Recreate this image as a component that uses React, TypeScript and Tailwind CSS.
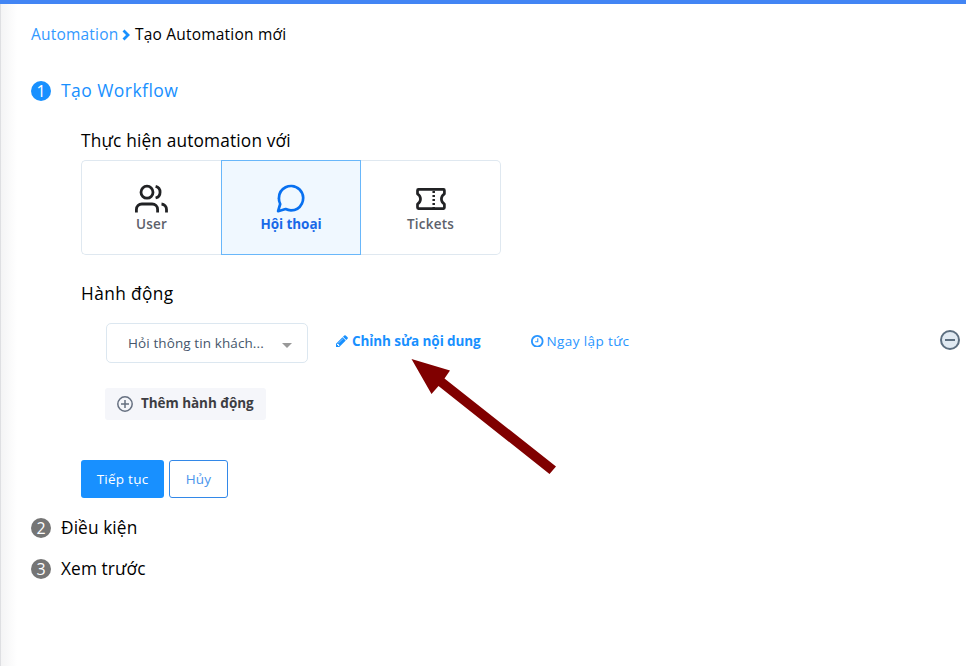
import type { ReactNode } from "react";

function Step({ n, active, children }: { n: number; active?: boolean; children: ReactNode }) {
  return (
    <div className="flex h-6 items-center">
      <span
        className={`flex size-5 shrink-0 items-center justify-center rounded-full text-[16px] leading-5 text-white ${
          active ? "bg-[#1890ff]" : "bg-[#757575]"
        }`}
      >
        {n}
      </span>
      <span className={`ml-2.5 pb-px whitespace-nowrap ${active ? "text-[17.5px] tracking-[0.45px] text-[#1890ff]" : "text-[17.3px] tracking-[0.1px] text-black"}`}>
        {children}
      </span>
    </div>
  );
}

function UsersIcon() {
  return (
    <svg className="block size-9" viewBox="0 0 36 36" fill="none" stroke="currentColor" strokeWidth="2.800">
      <path d="M2.400 32.500V29.500A5.500 5.500 0 0 1 7.900 24H18.100A5.500 5.500 0 0 1 23.600 29.500V32.500" />
      <circle cx="13" cy="12.200" r="6" />
      <path d="M32.500 32.500V29.500A5.500 5.500 0 0 0 27.500 24" />
      <path d="M21.600 6.400a6 6 0 0 1 0 11.600" />
    </svg>
  );
}

function ChatIcon() {
  return (
    <svg className="block size-9" viewBox="0 0 24 24" fill="none" stroke="currentColor" strokeWidth="1.800" strokeLinejoin="round">
      <path transform="translate(-.3 .9)" d="M20.400 11.200a8 8 0 0 1-.85 3.600 8.100 8.100 0 0 1-7.250 4.500 8 8 0 0 1-3.600-.85L3.700 19.900l1.400-4.800a8 8 0 0 1-.85-3.900 8.100 8.100 0 0 1 4.450-7.250 8 8 0 0 1 3.600-.85h.5a8.100 8.100 0 0 1 7.600 7.600z" />
    </svg>
  );
}

function TicketIcon() {
  return (
    <svg className="block h-6 w-8" viewBox="0 0 32 24" fill="none" stroke="currentColor" strokeLinejoin="round">
      <path strokeWidth="2.7" d="M3.400 2.400H28.600Q29.400 2.400 29.400 3.400V6.800Q26.400 8.800 26.400 12Q26.400 15.200 29.400 17.200V20.600Q29.400 21.600 28.600 21.600H3.400Q2.500 21.600 2.500 20.600V17.200Q5.500 15.200 5.500 12Q5.500 8.800 2.500 6.800V3.400Q2.500 2.400 3.400 2.400Z" />
      <path strokeWidth="2.500" strokeDasharray="2 2" d="M18.700 4V21" />
    </svg>
  );
}

export default function App() {
  return (
    <div className="relative h-[666px] w-[966px] overflow-hidden border-t-4 border-[#4285f4] bg-white font-['Open_Sans','Noto_Sans',sans-serif] text-black">
      <div className="flex h-full">
        <div className="w-[17px] shrink-0 border-l border-[#dedfe2] bg-linear-to-r from-[#f4f4f5] to-white" />
        <main className="flex flex-1 flex-col pt-[19px] pl-3.5">
          <nav className="flex h-6 items-center text-[15.5px] tracking-[0.2px] whitespace-nowrap">
            <a className="w-[89px] text-[#3399ff]">Automation</a>
            <svg className="mr-[4px] ml-[2px] h-[12px] w-[9px]" viewBox="0 0 9 12" fill="none" stroke="#1890ff" strokeWidth="2.800">
              <path d="M1.500 1.500L6 6L1.500 10.500" />
            </svg>
            <span>Tạo Automation mới</span>
          </nav>

          <div className="mt-8">
            <Step n={1} active>Tạo Workflow</Step>
          </div>

          <section className="mt-[26px] ml-[50px]">
            <h2 className="h-6 text-[17.3px] leading-[23px] tracking-[0.16px]">Thực hiện automation với</h2>
            <div className="mt-[7px] flex h-[95px] w-[420px] text-[13.5px] leading-5 font-semibold">
              <div className="flex w-[140px] flex-col items-center rounded-l-[5px] border border-r-0 border-[#dfe8f0] pt-[19px] text-[#5d616b]">
                <span className="text-[#212224]"><UsersIcon /></span>
                <span className="-mt-[2px] tracking-[0.2px]">User</span>
              </div>
              <div className="flex w-[140px] flex-col items-center border border-[#69b7fa] bg-[#f0f8ff] pt-[19px] text-[#1868e8]">
                <span className="text-[#0870f0]"><ChatIcon /></span>
                <span className="-mt-[2px] font-bold tracking-[-0.05px]">Hội thoại</span>
              </div>
              <div className="flex w-[140px] flex-col items-center rounded-r-[5px] border border-l-0 border-[#dfe8f0] pt-[26px] text-[#5d616b]">
                <span className="text-[#212224]"><TicketIcon /></span>
                <span className="mt-[3px] tracking-[0.2px]">Tickets</span>
              </div>
            </div>

            <h2 className="mt-[27px] h-6 text-[17.3px] leading-[23px] tracking-[0.4px]">Hành động</h2>
            <div className="mt-[17px] ml-[25px] flex h-10 text-[13.5px] whitespace-nowrap">
              <div className="flex w-[202px] items-center justify-between rounded-[5px] border border-[#dce7f0] pr-[15px] pl-[21px] text-[#46566b]">
                <span className="pt-px tracking-[0.1px]">Hỏi thông tin khách...</span>
                <span className="mt-1 border-x-5 border-t-5 border-x-transparent border-t-[#999]" />
              </div>
              <a className="ml-7 flex h-9 w-[195px] items-center font-bold text-[#1890ff]">
                <svg className="mr-1 size-3" viewBox="0 128 1536 1536" fill="currentColor">
                  <path d="M363 1536l91-91-235-235-91 91v107h128v128h107zm523-928q0-22-22-22-10 0-17 7l-542 542q-7 7-7 17 0 22 22 22 10 0 17-7l542-542q7-7 7-17zm-54-192l416 416-832 832h-416v-416zm683 96q0 53-37 90l-166 166-416-416 166-165q36-38 90-38 53 0 91 38l235 234q37 39 37 91z" />
                </svg>
                <span className="pt-px tracking-[-0.09px]">Chỉnh sửa nội dung</span>
              </a>
              <a className="flex h-9 items-center text-[#2995ff]">
                <svg className="mr-[3px] size-[12.5px]" viewBox="0 128 1536 1536" fill="currentColor">
                  <path d="M896 544v448q0 14-9 23t-23 9h-320q-14 0-23-9t-9-23v-64q0-14 9-23t23-9h224v-352q0-14 9-23t23-9h64q14 0 23 9t9 23zm416 352q0-148-73-273t-198-198-273-73-273 73-198 198-73 273 73 273 198 198 273 73 273-73 198-198 73-273zm224 0q0 209-103 385.5t-279.5 279.5-385.5 103-385.5-103-279.5-279.5-103-385.5 103-385.5 279.5-279.5 385.5-103 385.5 103 279.5 279.5 103 385.5z" />
                </svg>
                <span className="pt-px tracking-[0.4px]">Ngay lập tức</span>
              </a>
              <svg className="mt-[6px] mr-[5px] ml-auto size-[22px]" viewBox="0 0 22 22" stroke="#5d6f80" strokeWidth="2" fill="none">
                <circle cx="11" cy="11" r="9" fill="#e1eaf2" />
                <path d="M6 11h10" />
              </svg>
            </div>

            <button className="mt-[25px] ml-6 flex h-8 w-[161px] items-center rounded-[3px] bg-[#f5f6fa] pl-3 text-[13.5px] font-bold tracking-[-0.05px] whitespace-nowrap text-[#3d3d42]">
              <svg className="mr-2 size-4 shrink-0" viewBox="0 0 16 16" stroke="#667080" strokeWidth="1.500" fill="none">
                <circle cx="8" cy="8" r="7.200" />
                <path d="M4 8h8M8 4v8" />
              </svg>
              <span className="pb-px">Thêm hành động</span>
            </button>

            <div className="mt-10 flex h-[38px] gap-[5px] text-[13.5px] tracking-[0.25px]">
              <button className="w-[83px] rounded-[3px] bg-[#1890ff] pt-px whitespace-nowrap text-white">Tiếp tục</button>
              <button className="w-[59px] rounded-[3px] border border-[#3388e8] pt-px text-[#4a94ec]">Hủy</button>
            </div>
          </section>

          <div className="mt-[18px] flex flex-col gap-[17px]">
            <Step n={2}>Điều kiện</Step>
            <Step n={3}>Xem trước</Step>
          </div>
        </main>
      </div>
      <svg className="absolute top-[350px] left-[405px] h-[130px] w-[155px]" viewBox="0 0 155 130">
        <path d="M6.500 9L45 20.500L39.500 28.500L151 116.500L144.500 124L33.500 36L26.500 44Z" transform="translate(0 -4)" fill="#800000" />
      </svg>
    </div>
  );
}
